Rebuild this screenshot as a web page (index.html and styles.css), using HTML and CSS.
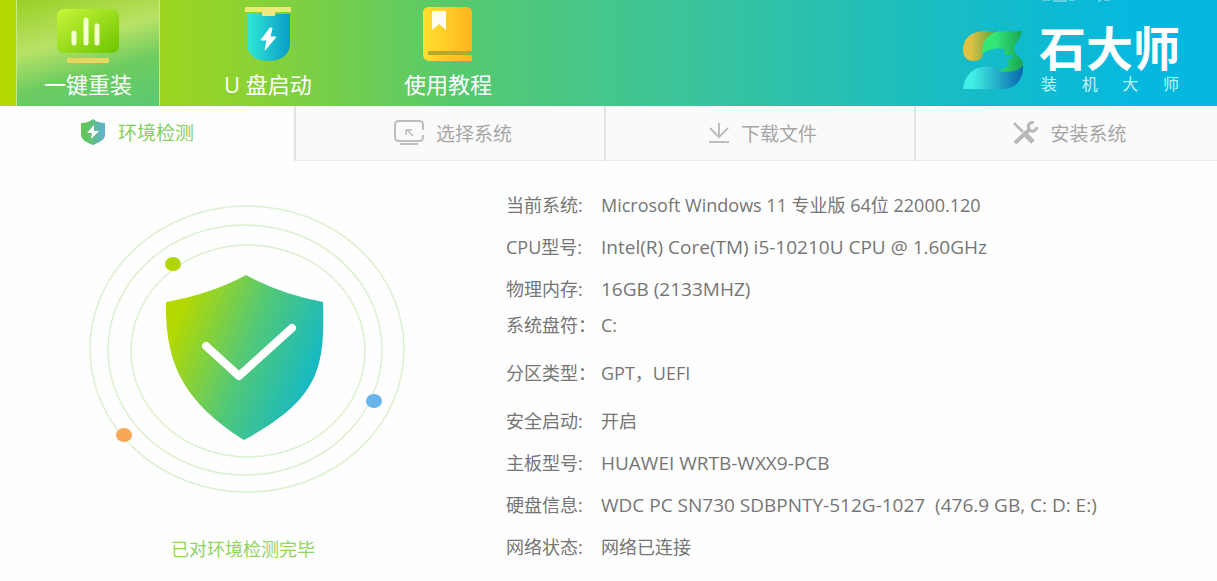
FILE: index.html
```html
<!DOCTYPE html>
<html lang="zh-CN">
<head>
  <meta charset="UTF-8">
  <meta name="viewport" content="width=device-width, initial-scale=1.0">
  <title>石大师装机大师</title>
  <link rel="stylesheet" href="styles.css">
</head>
<body>
  <header class="header">
    <nav class="main-nav">
      <button class="nav-item active" type="button">
        <svg width="64" height="58" viewBox="0 0 64 58" aria-hidden="true">
          <defs>
            <linearGradient id="screen" x1="0" y1="0" x2="1" y2="1">
              <stop offset="0" stop-color="#c8f53a"/>
              <stop offset="1" stop-color="#6cc400"/>
            </linearGradient>
          </defs>
          <rect x="1" y="3" width="62" height="44" rx="7" fill="url(#screen)"/>
          <path d="M18 27v10M30 14v23M41 20v17" stroke="#f4ffd0" stroke-width="5" stroke-linecap="round"/>
          <rect x="11" y="52" width="42" height="5" rx="1" fill="#e8d75c"/>
        </svg>
        <span>一键重装</span>
      </button>
      <button class="nav-item" type="button">
        <svg width="48" height="58" viewBox="0 0 48 58" aria-hidden="true">
          <defs>
            <linearGradient id="usb" x1="0" y1="0" x2="1" y2="0">
              <stop offset="0" stop-color="#2fe8d4"/>
              <stop offset="1" stop-color="#0a9cc8"/>
            </linearGradient>
          </defs>
          <path d="M3 8h43v29c0 12-9 18-21.500 18S3 49 3 37z" fill="url(#usb)"/>
          <path d="M1 1h46v5H31v4H18V6H1z" fill="#eee77c"/>
          <path d="M26 22l-9 12h6l-2 10 11-13h-6l2-9z" fill="#fff" stroke="#fff" stroke-linejoin="round"/>
        </svg>
        <span>U 盘启动</span>
      </button>
      <button class="nav-item" type="button">
        <svg width="52" height="58" viewBox="0 0 52 58" aria-hidden="true">
          <defs>
            <linearGradient id="book" x1="0" y1="0" x2="1" y2="0">
              <stop offset="0" stop-color="#ffe02e"/>
              <stop offset="1" stop-color="#ffb51f"/>
            </linearGradient>
          </defs>
          <path d="M7 1h37q6 0 6 6v36q0 3-4 3H6v3h44v6H8q-7 0-7-7V7q0-6 6-6z" fill="url(#book)"/>
          <path d="M7 45h41q0 4-4 4H7q-2-2 0-4z" fill="#b5a82c"/>
          <path d="M10 5h14v19l-7-6-7 6z" fill="#fffdf0"/>
        </svg>
        <span>使用教程</span>
      </button>
    </nav>
    <div class="brand">
      <svg class="brand-logo" width="62" height="62" viewBox="0 0 62 62" aria-hidden="true">
        <defs>
          <linearGradient id="logo-gold" x1="0" y1="0" x2="1" y2="0">
            <stop offset="0.200" stop-color="#e0c244"/>
            <stop offset="1" stop-color="#3f9c3c"/>
          </linearGradient>
          <linearGradient id="logo-green" x1="0" y1="0" x2="1" y2="0">
            <stop offset="0.300" stop-color="#34e878"/>
            <stop offset="1" stop-color="#18a352"/>
          </linearGradient>
          <linearGradient id="logo-blue" x1="0" y1="0" x2="1" y2="0">
            <stop offset="0.150" stop-color="#41f0e4"/>
            <stop offset="1" stop-color="#0867ae"/>
          </linearGradient>
        </defs>
        <path d="M38 2H24C10 2 1 9 1 21c0 7 4 11 11 11 6 0 9-3 9-8z" fill="url(#logo-gold)"/>
        <path d="M61 36c-5 7-16 6-27 3C16 34 3 43 1 60h39c14 0 22-10 21-24z" fill="url(#logo-blue)"/>
        <path d="M60 2H40C28 2 20 11 20 25c7-5 16-7 23-4l-1 4 6 2 2-2 1 4-5 2 1 6-5 2c-3 3-8 3-10 2 14 4 26 1 29-5 0-6-5-8-9-14 0-8 6-10 8-20z" fill="url(#logo-green)"/>
      </svg>
      <div class="brand-text">
        <strong>石大师</strong>
        <div class="brand-sub"><span>装</span><span>机</span><span>大</span><span>师</span></div>
      </div>
      <svg class="brand-edge" width="72" height="2" viewBox="0 0 72 2" aria-hidden="true">
        <path d="M1 0h8M12 1h14M28 0h6M57 1h3M63 0h6" stroke="#a5e6ee" stroke-width="1"/>
      </svg>
    </div>
  </header>

  <div class="steps" role="tablist">
    <button class="step current" type="button" role="tab" aria-selected="true">
      <svg width="26" height="28" viewBox="0 0 26 28" aria-hidden="true">
        <defs>
          <linearGradient id="mini-shield" x1="0" y1="0" x2="1" y2="0">
            <stop offset="0.200" stop-color="#62c75a"/>
            <stop offset="1" stop-color="#5fb0d8"/>
          </linearGradient>
        </defs>
        <path d="M13 1c4 3 8 4 12 4v12c0 5-7 8-12 10C8 25 1 22 1 17V5c4 0 8-1 12-4z" fill="url(#mini-shield)"/>
        <path d="M14 7l-7 8h5l-1 6 8-8h-5z" fill="#fff"/>
      </svg>
      <span>环境检测</span>
    </button>
    <button class="step" type="button" role="tab" aria-selected="false">
      <svg width="30" height="26" viewBox="0 0 30 26" fill="none" stroke="#bdbdbd" stroke-width="2" aria-hidden="true">
        <path d="M29 10V5q0-4-4-4H5Q1 1 1 5v12q0 4 4 4h20q4 0 4-4v-2M6 24h18"/>
        <path d="M19 16l-6-6M12 15v-5h6" stroke-width="1.500"/>
      </svg>
      <span>选择系统</span>
    </button>
    <button class="step" type="button" role="tab" aria-selected="false">
      <svg width="20" height="24" viewBox="0 0 20 24" fill="none" stroke="#bdbdbd" stroke-width="2" aria-hidden="true">
        <path d="M10 2v13M1 7l9 9 9-9M0 21h20"/>
      </svg>
      <span>下载文件</span>
    </button>
    <button class="step" type="button" role="tab" aria-selected="false">
      <svg width="26" height="24" viewBox="0 0 26 24" fill="none" stroke="#b8b8b8" aria-hidden="true">
        <path d="M2 2l9 9" stroke-width="2.500"/>
        <path d="M14 14l7 7" stroke-width="5"/>
        <path d="M3 22L17 9" stroke-width="4"/>
        <path d="M22 1c-4 0-7 3-5 7s7 2 8-2" stroke-width="3"/>
      </svg>
      <span>安装系统</span>
    </button>
  </div>

  <main class="content">
    <section class="status">
      <svg class="radar" viewBox="0 0 320 290" aria-hidden="true">
        <defs>
          <linearGradient id="shield" x1="0" y1="0.300" x2="1" y2="0.700">
            <stop offset="0.050" stop-color="#b4d900"/>
            <stop offset="0.500" stop-color="#52c878"/>
            <stop offset="0.900" stop-color="#18bac0"/>
          </linearGradient>
        </defs>
        <g fill="none" stroke="#dcf0ce" stroke-width="1.500">
          <ellipse cx="160" cy="145" rx="157" ry="143"/>
          <ellipse cx="158" cy="146" rx="137" ry="125"/>
          <ellipse cx="161" cy="147" rx="117" ry="106"/>
        </g>
        <path d="M159 71Q194 90 236 98C238 165 232 195 157 236 96 197 78 159 79 98Q124 90 159 71z" fill="url(#shield)"/>
        <path d="M119 142l33 30 53-48" fill="none" stroke="#fff" stroke-width="8" stroke-linecap="round" stroke-linejoin="round"/>
        <ellipse cx="86" cy="60" rx="8" ry="7" fill="#b0d607"/>
        <ellipse cx="287" cy="197" rx="8" ry="7" fill="#66b4e9"/>
        <ellipse cx="37" cy="231" rx="8" ry="7" fill="#f8a755"/>
      </svg>
      <p class="status-text">已对环境检测完毕</p>
    </section>

    <dl class="info">
      <div class="info-row"><dt>当前系统:</dt><dd>Microsoft Windows 11 专业版 64位 22000.120</dd></div>
      <div class="info-row"><dt>CPU型号:</dt><dd class="model">Intel(R) Core(TM) i5-10210U CPU @ 1.60GHz</dd></div>
      <div class="info-row tight"><dt>物理内存:</dt><dd class="model">16GB (2133MHZ)</dd></div>
      <div class="info-row loose"><dt>系统盘符：</dt><dd>C:</dd></div>
      <div class="info-row loose"><dt>分区类型：</dt><dd>GPT，UEFI</dd></div>
      <div class="info-row"><dt>安全启动:</dt><dd>开启</dd></div>
      <div class="info-row"><dt>主板型号:</dt><dd class="model">HUAWEI WRTB-WXX9-PCB</dd></div>
      <div class="info-row"><dt>硬盘信息:</dt><dd class="model">WDC PC SN730 SDBPNTY-512G-1027&nbsp; (476.9 GB, C: D: E:)</dd></div>
      <div class="info-row"><dt>网络状态:</dt><dd>网络已连接</dd></div>
    </dl>
  </main>
</body>
</html>
```
FILE: styles.css
```css
* {
  box-sizing: border-box;
}
body {
  margin: 0;
  background: #fefefe;
  color: #757575;
  font-family: "Open Sans", "Noto Sans CJK SC", sans-serif;
  font-size: 18px;
}
button {
  border: none;
  background: none;
  font-family: inherit;
  cursor: pointer;
}

/* header */
.header {
  display: flex;
  justify-content: space-between;
  height: 106px;
  padding: 0 36px 0 16px;
  background: linear-gradient(to right, #b4d900 0%, #92d32c 18%, #55c96f 38%, #3cc49a 56%, #1abdc0 76%, #05b8e0 94%);
}
.main-nav {
  display: flex;
  gap: 36px;
}
.nav-item {
  display: flex;
  flex-direction: column;
  align-items: center;
  gap: 4px;
  width: 144px;
  padding: 6px 0 0;
  color: #fff;
  font-size: 22px;
  line-height: 32px;
}
.nav-item.active {
  background: linear-gradient(165deg, #98d024 0%, #b8e266 38%, #6dcc60 65%, #5bc873 100%);
  border-left: 1px solid #c4ea8c;
  border-right: 1px solid #c4ea8c;
}
.brand {
  position: relative;
  display: flex;
  gap: 15px;
  padding-top: 24px;
}
.brand-logo {
  margin-top: 5px;
}
.brand-text {
  width: 142px;
  color: #fff;
}
.brand-text strong {
  display: block;
  font-size: 47px;
  line-height: 48px;
}
.brand-sub {
  display: flex;
  justify-content: space-between;
  padding: 0 2px;
  font-size: 16px;
  line-height: 24px;
  color: #c8f2f8;
}
.brand-edge {
  position: absolute;
  top: 0;
  right: 68px;
}

/* steps */
.steps {
  display: grid;
  grid-template-columns: 294fr 310fr 310fr 303fr;
}
.step {
  display: flex;
  align-items: center;
  justify-content: center;
  gap: 12px;
  height: 55px;
  padding: 0 0 0 6px;
  background: #fafafa;
  border-left: 2px solid #e2e2e2;
  border-bottom: 1px solid #ececec;
  color: #a6a6a6;
  font-size: 19px;
}
.step.current {
  padding: 0 20px 4px 0;
  background: #fefefe;
  border: none;
  color: #84cf62;
}

/* detection result */
.content {
  display: flex;
}
.status {
  width: 506px;
  padding: 43px 0 0 87px;
}
.radar {
  display: block;
  width: 320px;
}
.status-text {
  width: 312px;
  margin: 43px 0 0;
  color: #8ed45e;
  line-height: 24px;
  text-align: center;
}
.info {
  flex: 1;
  margin: 0;
  padding-top: 32px;
}
.info-row {
  display: flex;
  margin-bottom: 18px;
  line-height: 24px;
}
.info-row.tight {
  margin-bottom: 12px;
}
.info-row.loose {
  margin-bottom: 24px;
}
.info dt {
  width: 95px;
}
.info dd {
  margin: 0;
}
.info .model {
  font-size: 19px;
}
```
